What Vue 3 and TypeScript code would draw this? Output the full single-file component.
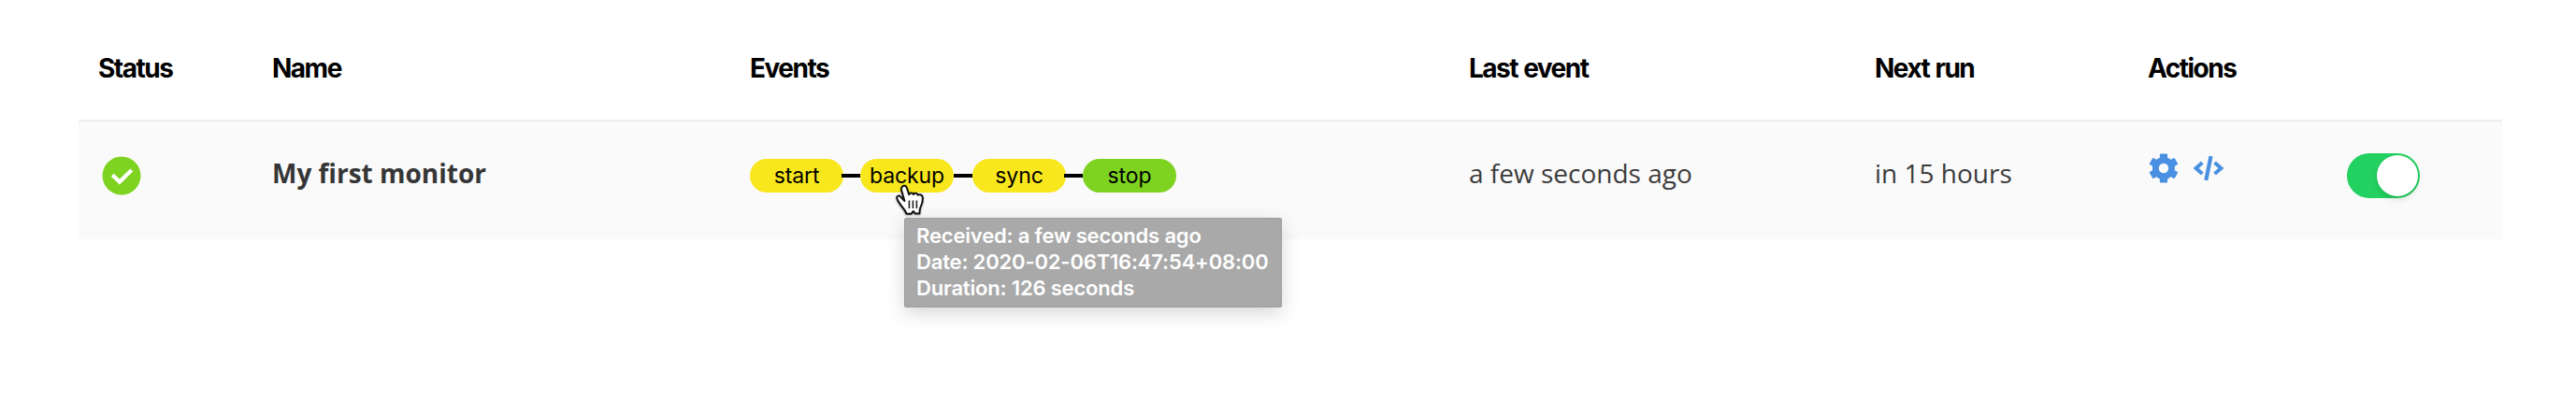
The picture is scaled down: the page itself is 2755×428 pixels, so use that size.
<script setup lang="ts">
interface PingEvent {
  name: string
  state: 'progress' | 'done'
}

const columns: string[] = ['Status', 'Name', 'Events', 'Last event', 'Next run', 'Actions', '']

const events: PingEvent[] = [
  { name: 'start', state: 'progress' },
  { name: 'backup', state: 'progress' },
  { name: 'sync', state: 'progress' },
  { name: 'stop', state: 'done' },
]

const details: string[] = [
  'Received: a few seconds ago',
  'Date: 2020-02-06T16:47:54+08:00',
  'Duration: 126 seconds',
]

const teeth: number[] = [0, 60, 120, 180, 240, 300]
</script>

<template>
  <main class="page">
    <section class="table">
      <header class="grid head">
        <div v-for="c in columns" :key="c" class="th">{{ c }}</div>
      </header>
      <div class="grid row">
        <div class="status">
          <svg width="42" height="42" viewBox="0 0 42 42">
            <circle cx="21" cy="21" r="20.5" fill="#7ed321" />
            <path d="M11.2 20.2 L18.9 27.5 L31.8 15" fill="none" stroke="#fff" stroke-width="4.2" />
          </svg>
        </div>
        <div class="name">My first monitor</div>
        <div class="events">
          <template v-for="(e, i) in events" :key="e.name">
            <span v-if="i > 0" class="link" :class="{ tucked: i !== 2 }"></span>
            <span class="pill" :class="e.state">{{ e.name }}
              <span v-if="e.name === 'backup'" class="tooltip">
                <span v-for="d in details" :key="d" class="line">{{ d }}</span>
              </span>
              <svg v-if="e.name === 'backup'" class="cursor" width="34" height="36" viewBox="0 0 34 36">
                <path
                  d="M8.2 3.5 C9.8 2 12 2.6 12.8 5 L15.2 12.2 C15.6 10.2 19 9.8 20 12 C21 10.2 24 10.4 24.6 12.8 C26.4 11.4 29.6 12.4 29.8 15.6 C30 20 29.2 22.4 27.6 25.4 C26.6 27.4 26.6 29 26.4 32.4 L21.8 32.4 L19.8 30 L17.4 32.8 L12.4 32.8 C11.6 29.4 8.6 26.6 6.4 23.4 C4.4 20.4 2.6 18.4 2.2 15.8 C2 13.6 4.4 12.8 6 14.4 L10.4 19 L7.4 8.4 C6.8 6.2 6.8 4.6 8.2 3.5 Z"
                  fill="#fff" stroke="#111" stroke-width="2" stroke-linejoin="round"
                />
                <path d="M15.4 18.5 V27 M19.4 18.5 V27 M23.4 18.5 V27" stroke="#222" stroke-width="1.6" fill="none" />
              </svg>
            </span>
          </template>
        </div>
        <div class="cell">a few seconds ago</div>
        <div class="cell">in 15 hours</div>
        <div class="actions">
          <svg width="32" height="32" viewBox="-16 -16 32 32" fill="#4a90e2">
            <path
              fill-rule="evenodd"
              d="M0 -12 A12 12 0 1 1 0 12 A12 12 0 1 1 0 -12 Z M0 -5.2 A5.2 5.2 0 1 0 0 5.2 A5.2 5.2 0 1 0 0 -5.2 Z"
            />
            <rect
              v-for="t in teeth" :key="t" x="-4.1" y="-15.6" width="8.2" height="6.4" rx="1.2"
              :transform="`rotate(${t})`"
            />
          </svg>
          <svg width="34" height="32" viewBox="0 0 34 32" fill="none" stroke="#4a90e2">
            <path d="M10.4 10 L3.6 16 L10.4 22 M23.6 10 L30.4 16 L23.6 22" stroke-width="4" />
            <path d="M19.5 3.2 L14.3 28.8" stroke-width="4.2" />
          </svg>
        </div>
        <div class="switch"><span class="knob"></span></div>
      </div>
    </section>
  </main>
</template>

<style>
body {
  margin: 0;
  background: #fff;
}
</style>

<style scoped>
.page {
  box-sizing: border-box;
  width: 2755px;
  height: 428px;
  padding: 18px 79px 0 84px;
  overflow: hidden;
  background: #fff;
}
.grid {
  display: grid;
  grid-template-columns: 186px 512px 768px 434px 292px 214px 1fr;
  align-items: center;
  box-sizing: border-box;
  padding-left: 20px;
}
.head {
  height: 112px;
  border-bottom: 2px solid #ededed;
}
.th {
  font: 700 28px/40px Inter, "Liberation Sans", sans-serif;
  letter-spacing: -1.5px;
  word-spacing: 1px;
  color: #000;
  align-self: start;
  margin-top: 35px;
  padding-left: 1px;
}
.th:nth-child(3) {
  padding-left: 0;
}
.row {
  height: 126px;
  background: #fafafa;
  color: #363636;
  font: 400 28px/40px "Open Sans", "Noto Sans", sans-serif;
}
.status {
  display: flex;
  padding-left: 5px;
  margin-top: -10px;
}
.name,
.cell {
  white-space: nowrap;
  margin-top: -16px;
  padding-left: 1px;
}
.name {
  font-weight: 700;
}
.cell {
  color: #3c3c3c;
}
.events {
  display: flex;
  align-items: center;
  margin-top: -10px;
}
.pill {
  position: relative;
  width: 100px;
  height: 36px;
  border-radius: 18px;
  font: 400 23px/36px Inter, "Liberation Sans", sans-serif;
  letter-spacing: -0.1px;
  text-align: center;
  color: #000;
}
.progress {
  background: #f8e71c;
}
.done {
  background: #7ed321;
}
.link {
  position: relative;
  z-index: 1;
  width: 20px;
  height: 4px;
  background: #000;
}
.tucked {
  margin-left: -2px;
}
.cursor {
  position: absolute;
  left: 37px;
  top: 26px;
  z-index: 3;
  filter: drop-shadow(0 1px 1px rgba(0, 0, 0, 0.35));
}
.tooltip {
  position: absolute;
  left: 47px;
  top: 63px;
  z-index: 2;
  box-sizing: border-box;
  width: 404px;
  height: 96px;
  padding: 4px 0 0 12px;
  border: 1px solid #9d9d9d;
  border-radius: 2px;
  background: #a9a9a9;
  box-shadow: 0 6px 20px rgba(0, 0, 0, 0.16);
  color: #fff;
  font: 600 22px/28px Inter, "Liberation Sans", sans-serif;
  letter-spacing: -0.17px;
  text-align: left;
}
.line {
  display: block;
  white-space: nowrap;
}
.actions {
  display: flex;
  gap: 15px;
  padding-left: 2px;
  margin-top: -26px;
}
.switch {
  box-sizing: border-box;
  display: flex;
  justify-content: flex-end;
  align-items: center;
  width: 78px;
  height: 48px;
  padding-right: 2px;
  margin-top: -10px;
  border-radius: 24px;
  background: #23d160;
}
.knob {
  width: 44px;
  height: 44px;
  border-radius: 50%;
  background: #fff;
  box-shadow: 0 4px 6px rgba(0, 0, 0, 0.1), 0 0 2px rgba(0, 0, 0, 0.06);
}
</style>
